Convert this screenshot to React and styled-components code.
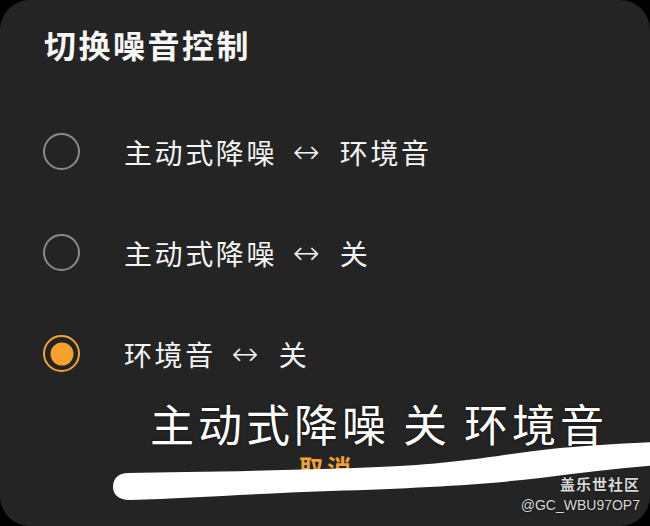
import styled, { createGlobalStyle } from 'styled-components'

const GlobalStyle = createGlobalStyle`
	html, body {
		margin: 0;
		padding: 0;
		background: #000;
	}
	body {
		font-family: 'Noto Sans CJK SC', 'Noto Sans', sans-serif;
	}
`

const options = [
	{ left: '主动式降噪', right: '环境音', checked: false },
	{ left: '主动式降噪', right: '关', checked: false },
	{ left: '环境音', right: '关', checked: true },
]

const App = () => {
	return (
		<>
			<GlobalStyle />
			<Card>
				<Title>切换噪音控制</Title>
				<List>
					{options.map(opt => (
						<Row key={opt.left + opt.right}>
							<Radio $checked={opt.checked} />
							<Label>
								{opt.left}
								<Arrow>↔</Arrow>
								{opt.right}
							</Label>
						</Row>
					))}
				</List>
				<Footer>
					<CancelBtn>取消</CancelBtn>
				</Footer>

				<Caption>
					主动式降噪<Gap />关<Gap />环境音
				</Caption>
				<Brush viewBox='0 0 650 526' preserveAspectRatio='none'>
					<path
						d='M128 473 C 200 472, 320 470, 400 466 C 470 462, 510 453, 560 448 C 600 445, 630 443, 660 442 L 660 465 C 620 468, 580 473, 540 478 C 480 485, 420 488, 330 491 C 250 494, 190 498, 130 500 C 117 500, 113 493, 113 487 C 113 478, 119 473, 128 473 Z'
						fill='#fff'
					/>
				</Brush>
				<Watermark>
					<WmTitle>盖乐世社区</WmTitle>
					<WmUser>@GC_WBU97OP7</WmUser>
				</Watermark>
			</Card>
		</>
	)
}

const Card = styled.div`
	position: relative;
	width: 650px;
	height: 526px;
	box-sizing: border-box;
	background: #242424;
	border-radius: 30px;
	overflow: hidden;
	display: flex;
	flex-direction: column;
`

const Title = styled.div`
	padding: 25px 0 0 44px;
	font-size: 32px;
	line-height: 38px;
	font-weight: 700;
	letter-spacing: 2.5px;
	color: #f6f6f6;
`

const List = styled.div`
	margin-top: 38px;
	display: flex;
	flex-direction: column;
`

const Row = styled.div`
	height: 101px;
	display: flex;
	align-items: center;
	padding-left: 43px;
	gap: 44px;
`

const Radio = styled.span`
	position: relative;
	flex-shrink: 0;
	width: 37px;
	height: 37px;
	box-sizing: border-box;
	border-radius: 50%;
	border: 2px solid ${props => (props.$checked ? '#f2a23a' : '#8a8a8a')};

	&::after {
		content: '';
		display: ${props => (props.$checked ? 'block' : 'none')};
		position: absolute;
		left: 50%;
		top: 50%;
		width: 23px;
		height: 23px;
		border-radius: 50%;
		background: #f5a12c;
		transform: translate(-50%, -50%);
	}
`

const Label = styled.span`
	font-size: 28px;
	line-height: 34px;
	letter-spacing: 2.6px;
	color: #f4f4f4;
	display: flex;
	align-items: center;
`

const Arrow = styled.span`
	font-family: 'DejaVu Sans', sans-serif;
	font-size: 32px;
	font-weight: 300;
	margin: 0 20px 0 16px;
	letter-spacing: 0;
`

const Footer = styled.div`
	margin-top: auto;
	padding-bottom: 46px;
	display: flex;
	justify-content: center;
`

const CancelBtn = styled.span`
	font-size: 24px;
	line-height: 26px;
	font-weight: 700;
	letter-spacing: 4px;
	color: #f0a234;
	padding-left: 4px;
`

const Caption = styled.div`
	position: absolute;
	left: 150px;
	top: 394px;
	font-size: 44px;
	line-height: 58px;
	letter-spacing: 4px;
	color: #fff;
	display: flex;
	text-shadow: 0 0 3px rgba(0, 0, 0, 0.6);
	white-space: nowrap;
`

const Gap = styled.span`
	width: 13px;
`

const Brush = styled.svg`
	position: absolute;
	left: 0;
	top: 0;
	width: 650px;
	height: 526px;
	pointer-events: none;
`

const Watermark = styled.div`
	position: absolute;
	right: 10px;
	top: 474px;
	display: flex;
	flex-direction: column;
	align-items: flex-end;
	color: #d8d8d8;
	text-shadow: 0 0 2px rgba(0, 0, 0, 0.8);
`

const WmTitle = styled.span`
	font-size: 15px;
	line-height: 20px;
	font-weight: 700;
	letter-spacing: 1px;
`

const WmUser = styled.span`
	font-family: 'Liberation Sans', sans-serif;
	font-size: 14px;
	line-height: 20px;
	margin-top: 1px;
`

export default App
